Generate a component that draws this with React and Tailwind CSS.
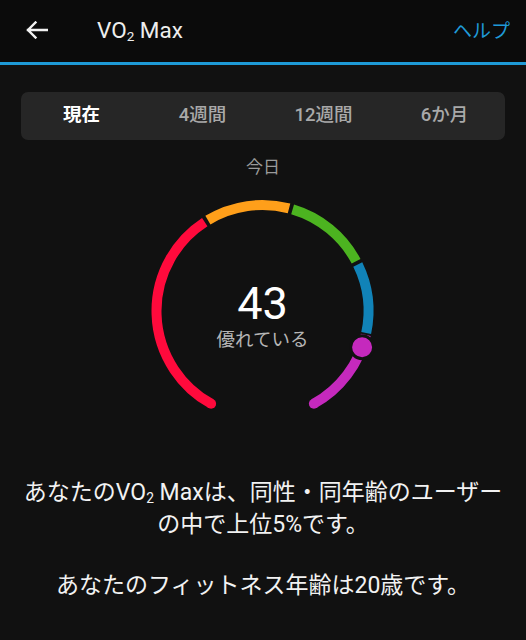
import React from "react";

const FONT = { fontFamily: "Roboto, 'Noto Sans CJK JP', sans-serif" };

const CX = 120;
const CY = 120;
const R = 106;

function pt(a) {
  const rad = (a * Math.PI) / 180;
  return [CX + R * Math.sin(rad), CY - R * Math.cos(rad)];
}

function arc(a0, a1) {
  const [x0, y0] = pt(a0);
  const [x1, y1] = pt(a1);
  const large = a1 - a0 > 180 ? 1 : 0;
  return `M ${x0} ${y0} A ${R} ${R} 0 ${large} 1 ${x1} ${y1}`;
}

const segments = [
  { from: -151, to: -33, color: "#ff0a3c" },
  { from: -31, to: 14.5, color: "#ff9f1a" },
  { from: 16.5, to: 62, color: "#4cb320" },
  { from: 64, to: 102, color: "#1183b8" },
  { from: 103, to: 151, color: "#c529bd" },
];

function Gauge() {
  const [sx, sy] = pt(-151);
  const [ex, ey] = pt(151);
  const [dx, dy] = pt(110);
  return (
    <svg width="240" height="240" viewBox="0 0 240 240">
      {segments.map((s) => (
        <path key={s.from} d={arc(s.from, s.to)} fill="none" stroke={s.color} strokeWidth="10" />
      ))}
      <circle cx={sx} cy={sy} r="5" fill="#ff0a3c" />
      <circle cx={ex} cy={ey} r="5" fill="#c529bd" />
      <circle cx={dx} cy={dy} r="11.5" fill="#c529bd" stroke="#111111" strokeWidth="3" />
    </svg>
  );
}

function Vo2() {
  return (
    <>
      VO<span className="text-[0.6em] relative top-[0.25em]">2</span> Max
    </>
  );
}

export default function App() {
  const tabs = ["現在", "4週間", "12週間", "6か月"];
  return (
    <div className="w-[526px] h-[640px] bg-[#111111] text-white overflow-hidden" style={FONT}>
      {/* Header */}
      <div className="h-[62px] bg-[#0b0b0b] flex items-center px-[26px]">
        <svg width="22" height="18" viewBox="0 0 22 18" className="mt-[-2px]">
          <path d="M21 9H2M9.5 1.5L2 9l7.5 7.5" fill="none" stroke="#f2f2f2" strokeWidth="2.4" strokeLinecap="square" />
        </svg>
        <div className="ml-[49px] text-[22.5px] font-normal text-[#eeeeee] leading-none mt-[-2px]">
          <Vo2 />
        </div>
        <div className="ml-auto mr-[-10px] text-[19px] text-[#1f9ad7] mt-[2px]">ヘルプ</div>
      </div>
      <div className="h-[3px] bg-[#1e9ad6]" />

      {/* Tabs */}
      <div className="mx-[21px] mt-[27px] h-[48px] rounded-[7px] bg-[#262626] grid grid-cols-4 items-center">
        {tabs.map((t, i) => (
          <div
            key={t}
            className={`text-center text-[18.5px] ${i === 0 ? "text-white font-bold" : "text-[#a9a9a9] font-medium"}`}
          >
            {t}
          </div>
        ))}
      </div>

      <div className="mt-[15px] text-center text-[17px] leading-[24px] text-[#9a9a9a]">今日</div>

      {/* Gauge */}
      <div className="relative w-[240px] h-[240px] mx-auto mt-[12px] translate-x-[-0.5px]">
        <Gauge />
        <div className="absolute inset-x-0 top-[90px] flex flex-col items-center">
          <div className="text-[45px] leading-[45px] text-white">43</div>
          <div className="mt-[3px] text-[18.5px] leading-[22px] text-[#b5b5b5]">優れている</div>
        </div>
      </div>

      {/* Description */}
      <div className="mt-[47px] text-center text-[23px] leading-[29px] text-[#f2f2f2]">
        <div>
          あなたの<Vo2 />は、同性・同年齢のユーザー
        </div>
        <div>の中で上位5%です。</div>
        <div className="mt-[32px]">あなたのフィットネス年齢は20歳です。</div>
      </div>
    </div>
  );
}
